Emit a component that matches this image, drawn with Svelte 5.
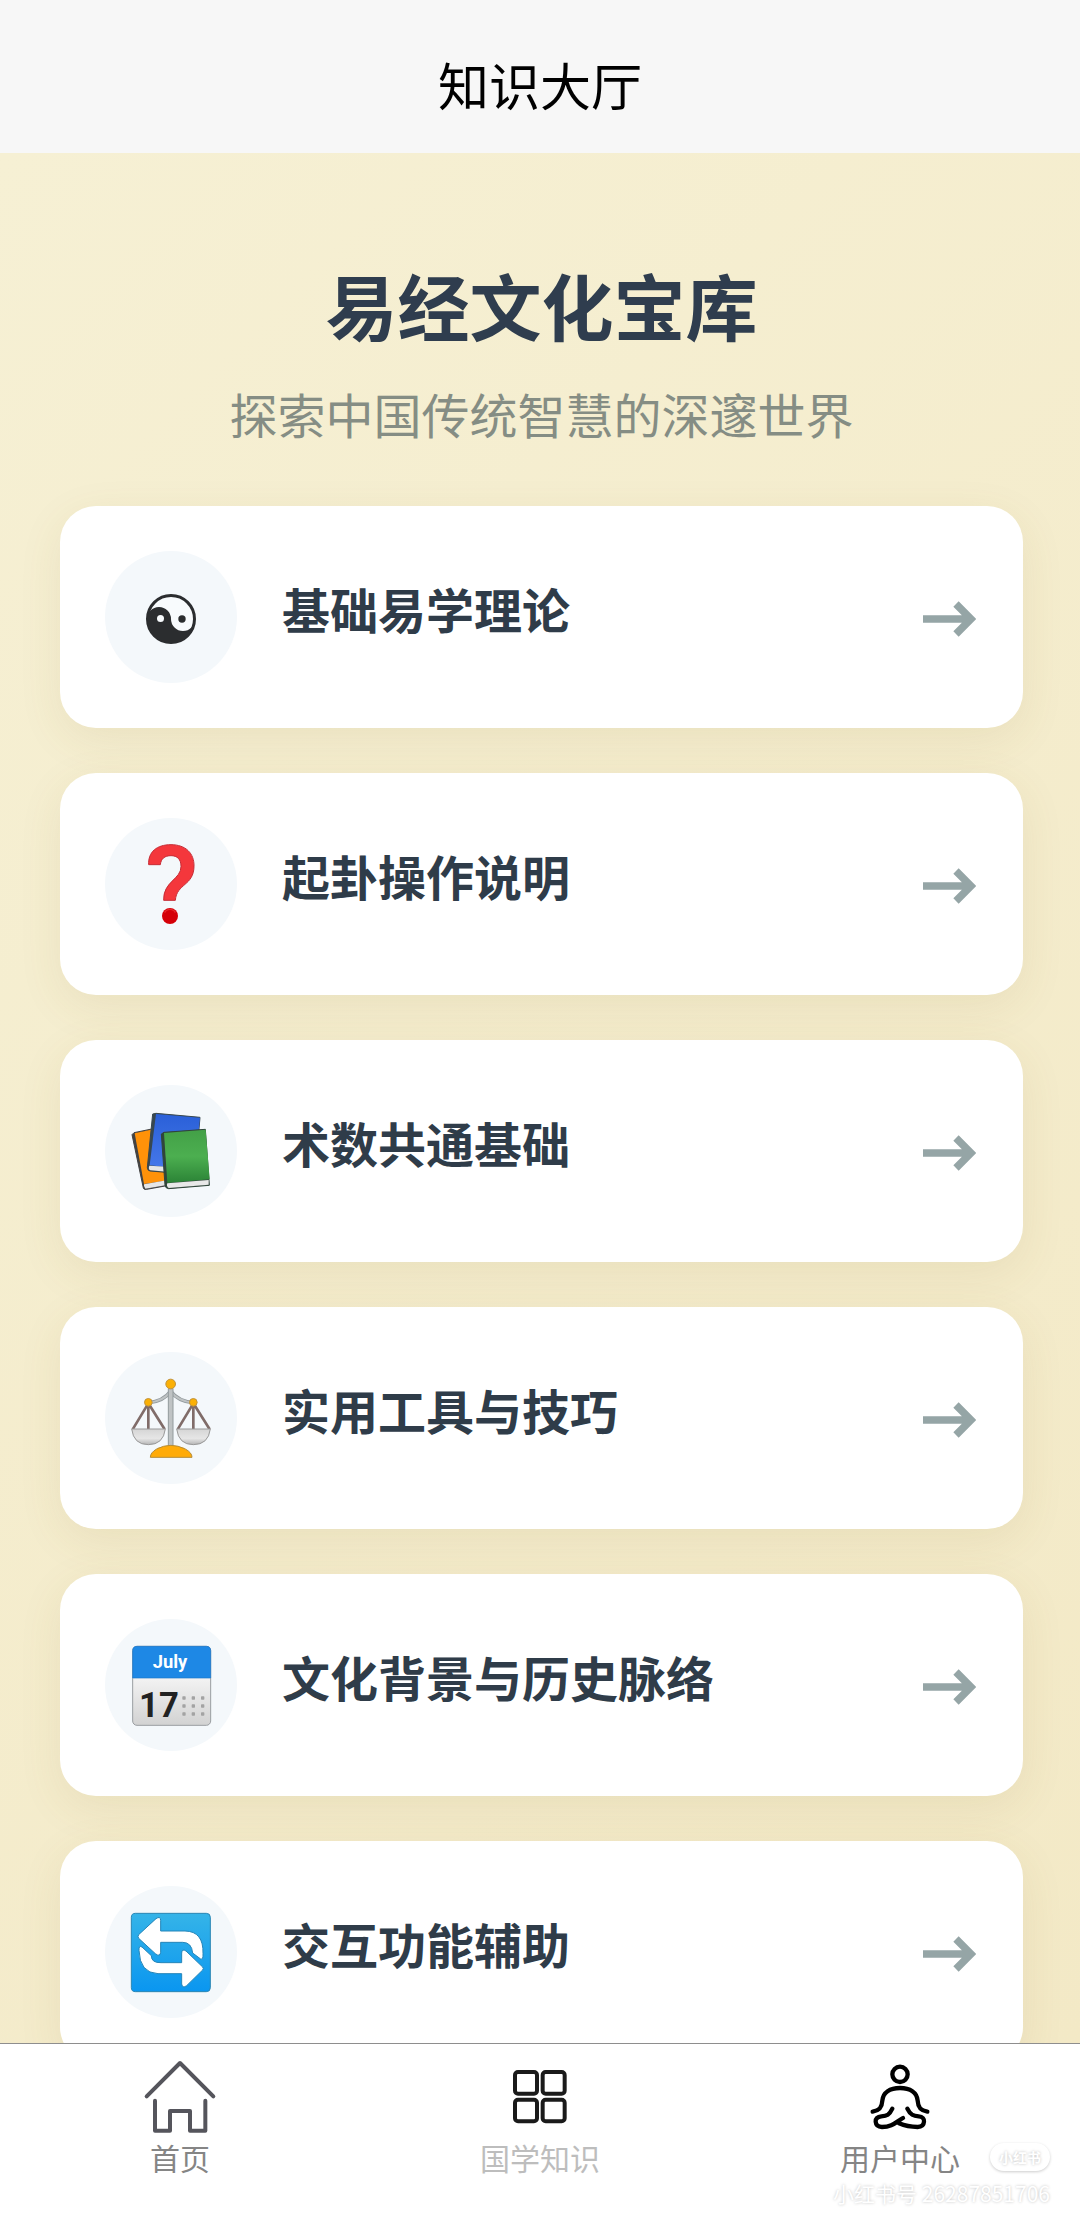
<script>
  const topics = [
    { icon: 'taiji', title: '基础易学理论' },
    { icon: 'question', title: '起卦操作说明' },
    { icon: 'books', title: '术数共通基础' },
    { icon: 'scales', title: '实用工具与技巧' },
    { icon: 'calendar', title: '文化背景与历史脉络' },
    { icon: 'cycle', title: '交互功能辅助' },
  ];
</script>

<div class="app">
  <header class="navbar"><span>知识大厅</span></header>

  <main>
    <div class="intro">
      <h1>易经文化宝库</h1>
      <p>探索中国传统智慧的深邃世界</p>
    </div>

    <div class="list">
      {#each topics as topic}
        <button class="card" type="button">
          <span class="badge">
            {#if topic.icon === 'taiji'}
              <svg viewBox="0 0 132 132" aria-hidden="true">
                <circle cx="66" cy="68" r="23.5" fill="#f8fbfd" stroke="#2b2d2f" stroke-width="3" />
                <path d="M42 68a12 12 0 0 1 24 0a12 12 0 0 0 24 0a24 24 0 0 1-48 0z" fill="#2b2d2f" />
                <circle cx="55.500" cy="67.500" r="3.500" fill="#f8fbfd" />
                <circle cx="77" cy="68" r="3.700" fill="#2b2d2f" />
              </svg>
            {:else if topic.icon === 'question'}
              <svg viewBox="15 54 396 396" aria-hidden="true">
                <path d="M146 194C144 156 170 134 213 134C257 134 283 160 282 199C281 258 230 250 226 301H191C189 244 244 238 243 199C243 178 232 167 213 167C194 167 183 176 181 194Z" fill="#f4373c" stroke="#c62c35" stroke-width="3" />
                <circle cx="210" cy="348" r="24" fill="#d50008" />
                <path d="M194 338a18 18 0 0 1 32 0" fill="none" stroke="#e5272a" stroke-width="4" />
              </svg>
            {:else if topic.icon === 'books'}
              <svg viewBox="15 45 396 396" aria-hidden="true">
                <defs>
                  <linearGradient id="bookBlue" x1="0" y1="0" x2="0" y2="1"><stop offset="0" stop-color="#2a60d8" /><stop offset="1" stop-color="#4678ea" /></linearGradient>
                  <linearGradient id="bookGreen" x1="0" y1="0" x2="0" y2="1"><stop offset="0" stop-color="#43a047" /><stop offset=".5" stop-color="#4caf50" /><stop offset="1" stop-color="#2b8336" /></linearGradient>
                </defs>
                <path d="M96 194L130 354Q132 360 140 358L212 345L205 178L160 176L102 188Z" fill="#424242" stroke="#424242" stroke-width="3" />
                <path d="M104 190L160 178L211 330L132 342Z" fill="#ff9209" />
                <path d="M132 343L204 330V344L136 356Q130 350 132 343Z" fill="#e6e6e6" />
                <path d="M158 132L142 292Q142 302 150 303L285 314L300 142L168 130Z" fill="#37474f" stroke="#37474f" stroke-width="3" />
                <path d="M168 132L300 143L284 300L149 286Z" fill="url(#bookBlue)" />
                <path d="M148 287L200 290V305L151 301Q144 298 148 287Z" fill="#e6e6e6" />
                <path d="M184 192L195 346Q197 356 206 356L328 346L326 316L316 178L192 187Z" fill="#30453a" stroke="#30453a" stroke-width="3" />
                <path d="M192 189L317 179L329 328L202 339Z" fill="url(#bookGreen)" />
                <path d="M202 340L326 330V344L206 354Q198 348 202 340Z" fill="#e8e8e8" />
              </svg>
            {:else if topic.icon === 'scales'}
              <svg viewBox="15 36 396 396" aria-hidden="true">
                <defs><linearGradient id="pan" x1="0" y1="0" x2="0" y2="1"><stop offset="0" stop-color="#d5d5d5" /><stop offset=".6" stop-color="#e6e6e6" /><stop offset="1" stop-color="#b5b5b5" /></linearGradient></defs>
                <path d="M145 190L98 268M145 190V268M145 190L194 268M280 190L233 268M280 190V268M280 190L329 268" fill="none" stroke="#806c69" stroke-width="8" />
                <path d="M145 188Q190 184 212 154Q235 184 280 188" fill="none" stroke="#929a9d" stroke-width="11" />
                <path d="M145 188Q190 184 212 154Q235 184 280 188" fill="none" stroke="#bfc3c4" stroke-width="6" />
                <path d="M205 146H219V318H205Z" fill="#bfc3c4" stroke="#929a9d" stroke-width="3" />
                <path d="M95 267H196Q190 314 145 314Q101 314 95 267ZM230 267H331Q325 314 280 314Q236 314 230 267Z" fill="url(#pan)" stroke="#999" stroke-width="3" />
                <path d="M151 352Q151 338 170 327Q212 305 256 327Q276 338 276 352Z" fill="#ffab08" stroke="#b58c37" stroke-width="3" />
                <circle cx="212" cy="132" r="14.500" fill="#fbb005" stroke="#c1933d" stroke-width="3" />
                <circle cx="145" cy="187" r="11.500" fill="#fbb005" stroke="#c1933d" stroke-width="3" />
                <circle cx="280" cy="187" r="11.500" fill="#fbb005" stroke="#c1933d" stroke-width="3" />
              </svg>
            {:else if topic.icon === 'calendar'}
              <svg viewBox="15 57 396 396" aria-hidden="true">
                <defs><linearGradient id="page" x1="0" y1="0" x2="0" y2="1"><stop offset=".4" stop-color="#f3f3f3" /><stop offset="1" stop-color="#d2d2d2" /></linearGradient></defs>
                <rect x="98" y="139" width="234" height="237" rx="13" fill="url(#page)" stroke="#9a9ea2" stroke-width="3" />
                <path d="M98 234V152Q98 139 111 139H319Q332 139 332 152V234Z" fill="#1e88e5" stroke="#1976c8" stroke-width="2" />
                <text x="210" y="205" text-anchor="middle" class="month">July</text>
                <text x="177" y="350" text-anchor="middle" class="day">17</text>
                <g fill="#a3a3a3">
                  {#each [294, 318, 342] as y}
                    {#each [252, 280, 308] as x}
                      <rect x={x - 5} y={y - 5} width="10" height="10" rx="2" />
                    {/each}
                  {/each}
                </g>
              </svg>
            {:else}
              <svg viewBox="15 48 396 396" aria-hidden="true">
                <defs><linearGradient id="tile" x1="0" y1="0" x2="0" y2="1"><stop offset="0" stop-color="#35b4e8" /><stop offset="1" stop-color="#0a96f0" /></linearGradient></defs>
                <rect x="94" y="130" width="237" height="235" rx="12" fill="url(#tile)" stroke="#2b86b4" stroke-width="3" />
                <g fill="#fff" stroke="#2585b8" stroke-width="3" stroke-linejoin="round">
                  <path d="M116 194L168 146Q181 137 182 151V183H255Q311 184 309 251Q310 270 302 267L278 249Q275 217 248 217H182V247Q180 262 166 251L116 205Q112 200 116 194Z" />
                  <path d="M308 291L258 243Q246 235 245 249V278H183Q154 279 154 257L126 231Q116 225 117 241Q119 309 174 311H245V342Q247 356 260 347L308 300Q312 295 308 291Z" />
                </g>
              </svg>
            {/if}
          </span>
          <span class="title">{topic.title}</span>
          <svg class="arrow" viewBox="0 0 54 38" aria-hidden="true">
            <path d="M1 19H49M34 4L49 19L34 34" fill="none" stroke="#95a5a6" stroke-width="7.500" />
          </svg>
        </button>
      {/each}
    </div>
  </main>

  <nav class="tabbar">
    <a href="#home">
      <svg viewBox="123 84 234 234" aria-hidden="true">
        <path d="M140 199L240 99L340 199M165 212V302H210V243H270V302H316V212" fill="none" stroke="#55555c" stroke-width="12" stroke-linecap="round" stroke-linejoin="round" />
      </svg>
      <span>首页</span>
    </a>
    <a href="#knowledge" class="current" aria-current="page">
      <svg viewBox="183 84 234 234" aria-hidden="true">
        <g fill="none" stroke="#1a1a1a" stroke-width="12">
          <rect x="225" y="126" width="66" height="65" rx="9" />
          <rect x="308" y="126" width="66" height="65" rx="9" />
          <rect x="225" y="209" width="66" height="65" rx="9" />
          <rect x="308" y="209" width="66" height="65" rx="9" />
        </g>
      </svg>
      <span>国学知识</span>
    </a>
    <a href="#user">
      <svg viewBox="183 84 234 234" aria-hidden="true">
        <g fill="none" stroke="#000" stroke-width="13" stroke-linecap="round" stroke-linejoin="round">
          <circle cx="300" cy="133" r="23" />
          <path d="M218 245C238 242 246 233 247 212C249 187 270 174 300 174C330 174 351 187 353 212C354 233 362 242 382 245" />
          <path d="M277 236C268 255 261 258 244 259C232 260 226 267 227 275C228 288 236 291 246 291C276 291 287 277 309 264" />
          <path d="M322 236C331 255 341 258 356 259C368 260 373 267 372 275C371 288 363 291 353 291C327 291 311 286 297 280" />
        </g>
      </svg>
      <span>用户中心</span>
    </a>
    <div class="watermark">
      <span class="pill">小红书</span>
      <span class="number">小红书号 26287851706</span>
    </div>
  </nav>
</div>

<style>
  :global(body) {
    margin: 0;
  }
  .app {
    display: flex;
    flex-direction: column;
    height: 100vh;
    font-family: 'Noto Sans CJK SC', sans-serif;
    color: #2c3e50;
  }
  .navbar {
    flex: none;
    padding: 48px 0 33px;
    background: #f7f7f7;
    color: #000;
    font-size: 51px;
    line-height: 72px;
    text-align: center;
  }
  main {
    flex: 1;
    min-height: 0;
    overflow-y: auto;
    scrollbar-width: none;
    box-sizing: border-box;
    padding: 101px 57px 60px 60px;
    background: linear-gradient(135deg, #f6f0d4, #f3e9c6);
  }
  .intro {
    margin-bottom: 57px;
    text-align: center;
  }
  h1 {
    margin: 0;
    color: #2f3d4e;
    font-size: 72px;
    font-weight: 700;
    line-height: 100px;
  }
  p {
    margin: 23px 0 0;
    color: #858d84;
    font-size: 48px;
    line-height: 72px;
  }
  .list {
    display: flex;
    flex-direction: column;
    gap: 45px;
  }
  .card {
    display: flex;
    align-items: center;
    width: 100%;
    padding: 45px 47px 45px 45px;
    border: 0;
    border-radius: 36px;
    background: #fff;
    box-shadow: 0 12px 45px rgba(120, 100, 30, 0.09);
    color: #2f3c49;
    font: inherit;
    text-align: left;
  }
  .badge {
    flex: none;
    width: 132px;
    height: 132px;
    border-radius: 50%;
    background: #f4f8fb;
  }
  .badge svg {
    display: block;
    width: 100%;
    height: 100%;
  }
  .month {
    fill: #fff;
    font: 700 55px Roboto, sans-serif;
  }
  .day {
    fill: #222;
    font: 700 104px Roboto, sans-serif;
  }
  .title {
    flex: 1;
    margin-left: 45px;
    padding-bottom: 18px;
    font-size: 48px;
    font-weight: 700;
    line-height: 66px;
  }
  .arrow {
    flex: none;
    width: 54px;
    height: 38px;
    padding-top: 4px;
  }
  .tabbar {
    position: relative;
    flex: none;
    display: flex;
    padding: 14px 0 53px;
    border-top: 1px solid #8e8e8e;
    background: #fff;
  }
  .tabbar a {
    flex: 1;
    display: flex;
    flex-direction: column;
    align-items: center;
    gap: 3px;
    color: #858585;
    font-size: 30px;
    line-height: 36px;
    text-decoration: none;
  }
  .tabbar a.current {
    color: #bdbdbd;
  }
  .tabbar a svg {
    width: 78px;
    height: 78px;
  }
  .watermark {
    position: absolute;
    right: 30px;
    bottom: 21px;
    display: flex;
    flex-direction: column;
    align-items: flex-end;
    gap: 8px;
    color: #fff;
    font-size: 21px;
    line-height: 28px;
    text-shadow: 0 0 3px rgba(0, 0, 0, 0.25);
    pointer-events: none;
  }
  .pill {
    padding: 0 9px;
    border-radius: 14px;
    background: #fff;
    box-shadow: 0 1px 3px rgba(0, 0, 0, 0.2);
    font-size: 14px;
    font-weight: 700;
  }
</style>
